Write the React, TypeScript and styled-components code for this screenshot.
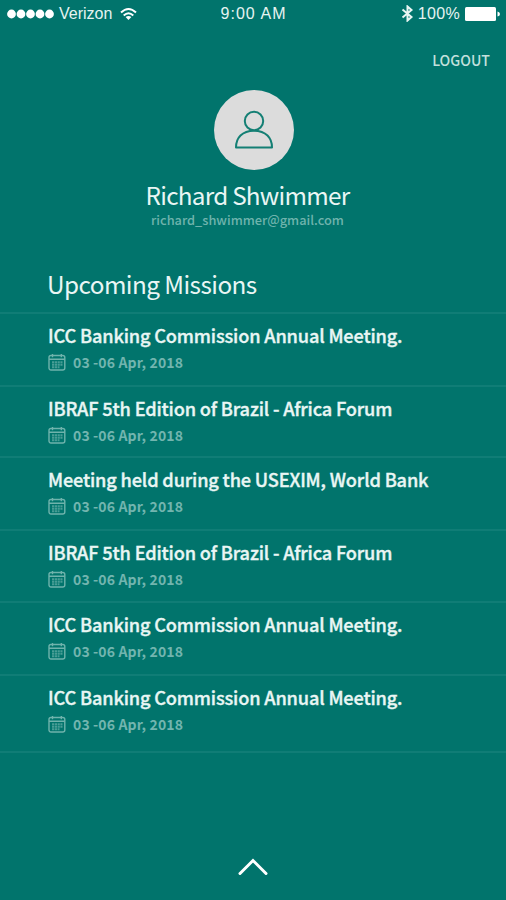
import React from "react";
import styled, { createGlobalStyle } from "styled-components";

const GlobalStyle = createGlobalStyle`
  * { box-sizing: border-box; }
  body { margin: 0; background: #01746c; }
`;

const Screen = styled.main`
  display: flex;
  flex-direction: column;
  width: 506px;
  height: 900px;
  overflow: hidden;
  background: #01746c;
  color: #e9f6f4;
  font-family: "Noto Sans CJK SC", "Noto Sans", sans-serif;
  white-space: nowrap;
`;

const StatusBar = styled.header`
  display: grid;
  grid-template-columns: 1fr auto 1fr;
  align-items: center;
  height: 27px;
  padding: 0 6px 0 7px;
  font: 16px/27px "Liberation Sans", Arial, sans-serif;
  color: #e6f3f1;
`;

const StatusGroup = styled.div<{ $end?: boolean }>`
  display: flex;
  align-items: center;
  justify-content: ${(p) => (p.$end ? "flex-end" : "flex-start")};
`;

const Signal = styled.svg`
  width: 47px;
  height: 10px;
  margin-right: 5px;
  fill: #fff;
`;

const StatusText = styled.span<{ $spacing?: number; $gap?: number }>`
  margin-left: ${(p) => p.$gap ?? 0}px;
  letter-spacing: ${(p) => p.$spacing ?? 0}px;
`;

const StatusIcon = styled.svg<{ $gap?: number }>`
  display: block;
  margin-left: ${(p) => p.$gap ?? 0}px;
`;

const TopActions = styled.nav`
  display: flex;
  justify-content: flex-end;
  height: 63px;
  padding: 23px 16px 0 0;
`;

const LogoutButton = styled.button`
  height: 20px;
  padding: 0;
  border: 0;
  background: none;
  color: #c3e0dd;
  font: 500 14.2px/20px "Noto Sans CJK SC", sans-serif;
`;

const Profile = styled.section`
  display: flex;
  flex-direction: column;
  align-items: center;
  height: 166px;
`;

const Avatar = styled.div`
  display: grid;
  place-items: center;
  width: 80px;
  height: 80px;
  margin-left: 2px;
  border-radius: 50%;
  background: #dcdcdc;
`;

const ProfileName = styled.h1`
  margin: 8px 0 0;
  padding-right: 11px;
  font-size: 24.3px;
  font-weight: 400;
  line-height: 33px;
  letter-spacing: -0.75px;
`;

const Email = styled.p`
  margin: 0;
  padding-right: 11px;
  font-size: 12.8px;
  font-weight: 500;
  line-height: 17px;
  color: #6fb3ac;
`;

const SectionTitle = styled.h2`
  height: 56px;
  margin: 0;
  padding: 12px 0 0 47px;
  font-size: 24.3px;
  font-weight: 400;
  line-height: 31px;
  letter-spacing: -0.55px;
`;

const MissionList = styled.ul`
  margin: 0;
  padding: 0;
  list-style: none;
  border-bottom: 2px solid #107d76;
`;

const MissionRow = styled.li<{ $height: number }>`
  height: ${(p) => p.$height}px;
  padding: 8px 0 0 48px;
  border-top: 2px solid #107d76;
`;

const MissionTitle = styled.h3`
  margin: 0 0 1px;
  font-size: 18.2px;
  font-weight: 500;
  line-height: 26px;
  letter-spacing: -0.16px;
  -webkit-text-stroke: 0.35px currentColor;
`;

const MissionDate = styled.div`
  display: flex;
  align-items: center;
  gap: 7px;
  height: 25px;
  color: #72b5af;
  font-size: 14px;
  font-weight: 700;
  line-height: 20px;
  letter-spacing: 0.12px;
`;

const ExpandButton = styled.button`
  display: flex;
  justify-content: center;
  margin: 105px 0 0;
  padding: 0;
  border: 0;
  background: none;
`;

function CalendarIcon() {
  return (
    <svg width="18" height="18" viewBox="0 0 18 18" fill="none" stroke="#6fb3ac" strokeWidth="1.4">
      <rect x="1" y="2.5" width="15.8" height="14.5" rx="2" />
      <path d="M1 6.300h15.800M4.500 1v3.200M13.300 1v3.200" />
      <path d="M4 9.200h10.500M4 11.800h10.500M4 14.300h7.500" strokeWidth="1.9" strokeDasharray="2.200 0.600" opacity="0.65" />
    </svg>
  );
}

const missions = [
  { title: "ICC Banking Commission Annual Meeting.", height: 73 },
  { title: "IBRAF 5th Edition of Brazil - Africa Forum", height: 71 },
  { title: "Meeting held during the USEXIM, World Bank", height: 73 },
  { title: "IBRAF 5th Edition of Brazil - Africa Forum", height: 72 },
  { title: "ICC Banking Commission Annual Meeting.", height: 73 },
  { title: "ICC Banking Commission Annual Meeting.", height: 77 },
];

export default function App() {
  return (
    <Screen>
      <GlobalStyle />
      <StatusBar>
        <StatusGroup>
          <Signal viewBox="0 0 47 10">
            {[4.5, 14, 23.5, 33, 42.5].map((cx) => (
              <circle key={cx} cx={cx} cy="5" r="4.4" />
            ))}
          </Signal>
          <StatusText>Verizon</StatusText>
          <StatusIcon $gap={8} width="17" height="14" viewBox="0 0 17 14" fill="none" stroke="#fff" strokeWidth="2">
            <path d="M1 5.500Q8.500-1.500 16 5.500M3.700 8.500Q8.500 4 13.300 8.500" />
            <path d="M8.500 13 5.600 10Q8.500 7.800 11.400 10Z" fill="#fff" stroke="none" />
          </StatusIcon>
        </StatusGroup>
        <StatusText $spacing={1.05}>9:00 AM</StatusText>
        <StatusGroup $end>
          <StatusIcon width="13" height="17" viewBox="0 0 13 17" fill="none" stroke="#e9f5f3" strokeWidth="2">
            <path d="m1.500 4.500 9 7.500-4 3.500v-14l4 3.500-9 7.500" />
          </StatusIcon>
          <StatusText $gap={4} $spacing={0.35}>100%</StatusText>
          <StatusIcon $gap={5} width="35" height="14" viewBox="0 0 35 14" fill="#fff">
            <rect width="31" height="14" rx="1.500" />
            <path d="M32.500 4.500Q35 5 35 7t-2.500 2.500Z" />
          </StatusIcon>
        </StatusGroup>
      </StatusBar>
      <TopActions>
        <LogoutButton>LOGOUT</LogoutButton>
      </TopActions>
      <Profile>
        <Avatar>
          <svg width="40" height="40" viewBox="0 0 40 40" fill="none" stroke="#147f74" strokeWidth="2">
            <circle cx="20" cy="11" r="9.200" />
            <path d="M2 37.500C2 28 8 20.700 20 20.700S38 28 38 37.500Z" strokeLinejoin="round" />
          </svg>
        </Avatar>
        <ProfileName>Richard Shwimmer</ProfileName>
        <Email>richard_shwimmer@gmail.com</Email>
      </Profile>
      <SectionTitle>Upcoming Missions</SectionTitle>
      <MissionList>
        {missions.map((m, i) => (
          <MissionRow key={i} $height={m.height}>
            <MissionTitle>{m.title}</MissionTitle>
            <MissionDate>
              <CalendarIcon />
              <span>03 -06 Apr, 2018</span>
            </MissionDate>
          </MissionRow>
        ))}
      </MissionList>
      <ExpandButton aria-label="Expand">
        <svg width="30" height="18" viewBox="0 0 30 18" fill="none" stroke="#fff" strokeWidth="3" strokeLinecap="round">
          <path d="m2 15.500 13-13 13 13" />
        </svg>
      </ExpandButton>
    </Screen>
  );
}
